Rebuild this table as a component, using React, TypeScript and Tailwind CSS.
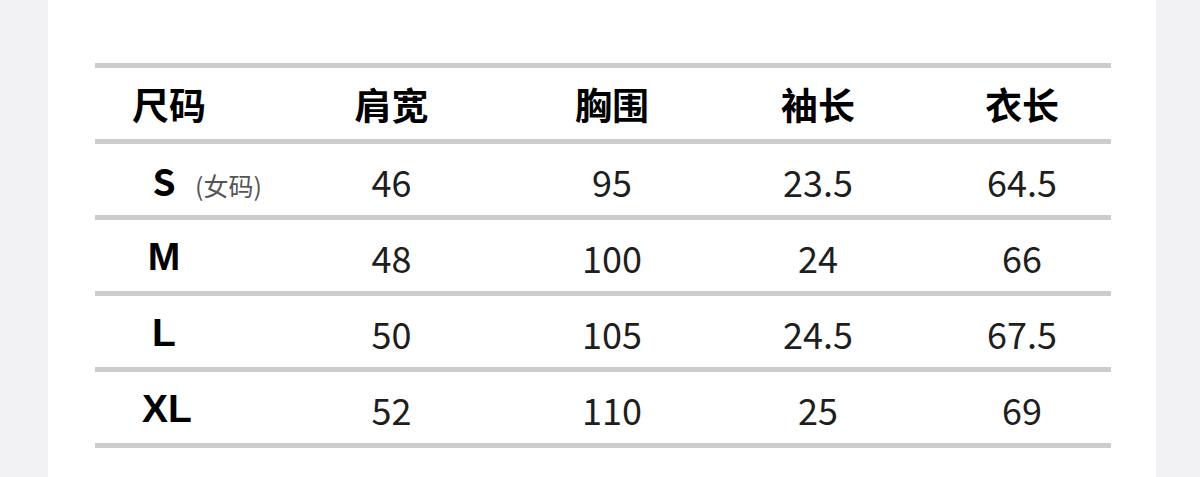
const cjk = "font-['Noto_Sans_CJK_SC','Noto_Sans',sans-serif]";

const headers = ["肩宽", "胸围", "袖长", "衣长"];

const rows: { size: string; note?: string; values: string[] }[] = [
  { size: "S", note: "(女码)", values: ["46", "95", "23.5", "64.5"] },
  { size: "M", values: ["48", "100", "24", "66"] },
  { size: "L", values: ["50", "105", "24.5", "67.5"] },
  { size: "XL", values: ["52", "110", "25", "69"] },
];

const cols = "grid grid-cols-[186px_221px_220px_192px_197px] items-center";

export default function App() {
  return (
    <div className={`flex h-[477px] w-[1200px] bg-[#f2f2f4] ${cjk}`}>
      <div className="ml-[48px] w-[1108px] bg-white pl-[47px] pt-[63px]">
        <div className="w-[1016px] border-b-[5px] border-[#cccccc]">
          <div className={`${cols} h-[76px] border-t-[5px] border-[#cccccc] pt-[2px] text-[37px] font-bold leading-none text-black`}>
            <div className="pl-[37px]">尺码</div>
            {headers.map((h, i) => (
              <div key={h} className={`text-center ${i === 3 ? "pl-[19px]" : ""}`}>
                {h}
              </div>
            ))}
          </div>
          {rows.map((r) => (
            <div
              key={r.size}
              className={`${cols} h-[76px] border-t-[5px] border-[#cccccc] pt-[2px] leading-none text-[#1e1e1e]`}
            >
              <div className="flex items-baseline pl-[47px]">
                <span
                  className={`w-[44px] text-center font-bold text-black ${
                    r.size === "S" ? "text-[37px]" : "font-['Liberation_Sans',sans-serif] text-[39px]"
                  }`}
                >
                  {r.size}
                </span>
                {r.note && <span className="ml-[9px] text-[25px] text-[#555555]">{r.note}</span>}
              </div>
              {r.values.map((v, i) => (
                <div key={i} className={`text-center text-[36px] ${i === 3 ? "pl-[19px]" : ""}`}>
                  {v}
                </div>
              ))}
            </div>
          ))}
        </div>
      </div>
    </div>
  );
}
